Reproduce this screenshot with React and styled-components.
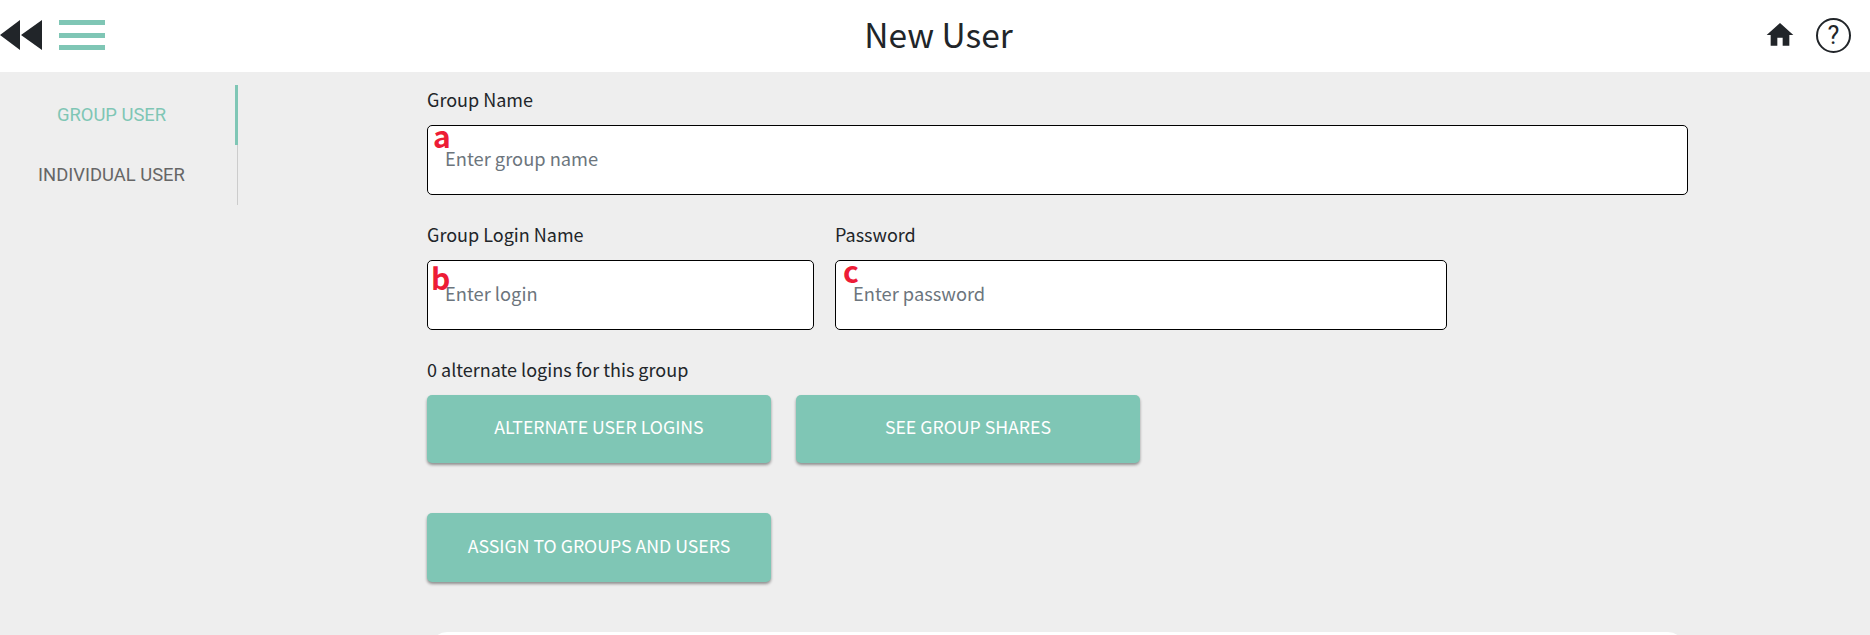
import styled, { createGlobalStyle } from "styled-components";

const GlobalStyle = createGlobalStyle`
  html, body {
    margin: 0;
    padding: 0;
    height: 100%;
    overflow: hidden;
    background-color: #eeeeee;
  }
  * {
    box-sizing: border-box;
  }
`;

const fontStack = `"Noto Sans CJK SC", "Noto Sans", sans-serif`;

export default function App() {
  return (
    <>
      <GlobalStyle />
      <Header>
        <HeaderLeft>
          <svg width="43" height="30" viewBox="0 0 43 30">
            <path d="M0 15 20 0v30zM21 15 42 0v30z" fill="#212529" />
          </svg>
          <Hamburger>
            <span />
            <span />
            <span />
          </Hamburger>
        </HeaderLeft>
        <Title>New User</Title>
        <HeaderRight>
          <svg width="32" height="32" viewBox="0 0 24 24">
            <path d="M10 20v-6h4v6h5v-8h3L12 3 2 12h3v8z" fill="#212529" />
          </svg>
          <HelpCircle>?</HelpCircle>
        </HeaderRight>
      </Header>
      <Body>
        <Sidebar>
          <Tab $active>GROUP USER</Tab>
          <Tab>INDIVIDUAL USER</Tab>
        </Sidebar>
        <Main>
          <Field>
            <Label>Group Name</Label>
            <InputWrap>
              <Marker $left={6} $top={-8}>a</Marker>
              <Input placeholder="Enter group name" />
            </InputWrap>
          </Field>
          <Row>
            <Field $width={387}>
              <Label>Group Login Name</Label>
              <InputWrap>
                <Marker $left={4} $top={-1}>b</Marker>
                <Input placeholder="Enter login" />
              </InputWrap>
            </Field>
            <Field $width={612}>
              <Label>Password</Label>
              <InputWrap>
                <Marker $left={8} $top={-8}>c</Marker>
                <Input placeholder="Enter password" />
              </InputWrap>
            </Field>
          </Row>
          <Count>0 alternate logins for this group</Count>
          <ButtonRow>
            <Button>ALTERNATE USER LOGINS</Button>
            <Button>SEE GROUP SHARES</Button>
          </ButtonRow>
          <ButtonRow $top={50}>
            <Button $tall>ASSIGN TO GROUPS AND USERS</Button>
          </ButtonRow>
          <Panel />
        </Main>
      </Body>
    </>
  );
}

const Header = styled.header`
  height: 72px;
  padding-bottom: 2px;
  background-color: #ffffff;
  display: flex;
  align-items: center;
  justify-content: space-between;
  position: relative;
`;
const HeaderLeft = styled.div`
  display: flex;
  align-items: center;
  gap: 16px;
`;
const Hamburger = styled.div`
  width: 46px;
  height: 30px;
  display: flex;
  flex-direction: column;
  justify-content: space-between;
  span {
    height: 5px;
    background-color: #7fc6b5;
  }
`;
const Title = styled.h1`
  margin: 0 0 4px 7px;
  position: absolute;
  left: 0;
  right: 0;
  text-align: center;
  pointer-events: none;
  font-family: ${fontStack};
  font-size: 33.5px;
  font-weight: 400;
  color: #212529;
`;
const HeaderRight = styled.div`
  display: flex;
  align-items: center;
  gap: 20px;
  padding-right: 19px;
`;
const HelpCircle = styled.div`
  width: 35px;
  height: 35px;
  border: 2px solid #212529;
  border-radius: 50%;
  display: flex;
  align-items: center;
  justify-content: center;
  font-family: "Roboto", sans-serif;
  font-size: 25px;
  color: #212529;
`;
const Body = styled.div`
  display: flex;
  height: 563px;
  overflow: hidden;
`;
const Sidebar = styled.nav`
  width: 238px;
  padding-top: 13px;
  flex-shrink: 0;
`;
const Tab = styled.div`
  height: 60px;
  padding-bottom: 2px;
  display: flex;
  align-items: center;
  justify-content: center;
  font-family: "Roboto", sans-serif;
  font-size: 18.4px;
  color: ${(props) => (props.$active ? "#7fc6b5" : "#666666")};
  border-right: ${(props) =>
    props.$active ? "3px solid #7fc6b5" : "1px solid #cccccc"};
  padding-right: ${(props) => (props.$active ? "12px" : "14px")};
`;
const Main = styled.main`
  width: 1261px;
  margin-left: 189px;
  padding-top: 12px;
`;
const Field = styled.div`
  width: ${(props) => (props.$width ? `${props.$width}px` : "100%")};
`;
const Label = styled.div`
  font-family: ${fontStack};
  font-size: 18px;
  line-height: 30px;
  color: #212529;
  margin-bottom: 11px;
`;
const InputWrap = styled.div`
  position: relative;
`;
const Marker = styled.span`
  position: absolute;
  z-index: 1;
  left: ${(props) => props.$left}px;
  top: ${(props) => props.$top}px;
  font-family: ${fontStack};
  font-size: 30px;
  font-weight: 700;
  line-height: 36px;
  color: #ed1c36;
`;
const Input = styled.input`
  display: block;
  width: 100%;
  height: 70px;
  padding: 0 17px 4px;
  background-color: #ffffff;
  border: 1px solid #000000;
  border-radius: 5px;
  outline: none;
  font-family: ${fontStack};
  font-size: 18.3px;
  color: #212529;
  &::placeholder {
    color: #6c757d;
    opacity: 1;
  }
`;
const Row = styled.div`
  display: flex;
  gap: 21px;
  margin-top: 24px;
`;
const Count = styled.div`
  font-family: ${fontStack};
  font-size: 18px;
  line-height: 30px;
  color: #212529;
  margin-top: 24px;
`;
const ButtonRow = styled.div`
  display: flex;
  gap: 25px;
  margin-top: ${(props) => (props.$top ? `${props.$top}px` : "11px")};
`;
const Button = styled.button`
  width: 344px;
  height: ${(props) => (props.$tall ? "69px" : "68px")};
  padding: 0 0 ${(props) => (props.$tall ? "5px" : "6px")};
  border: none;
  border-radius: 5px;
  background-color: #7fc6b5;
  box-shadow: 0 2px 3px rgba(0, 0, 0, 0.4);
  font-family: ${fontStack};
  font-size: 17.7px;
  color: #ffffff;
`;
const Panel = styled.div`
  height: 120px;
  margin: 50px 4px 0;
  background-color: #ffffff;
  border-radius: 16px;
`;
